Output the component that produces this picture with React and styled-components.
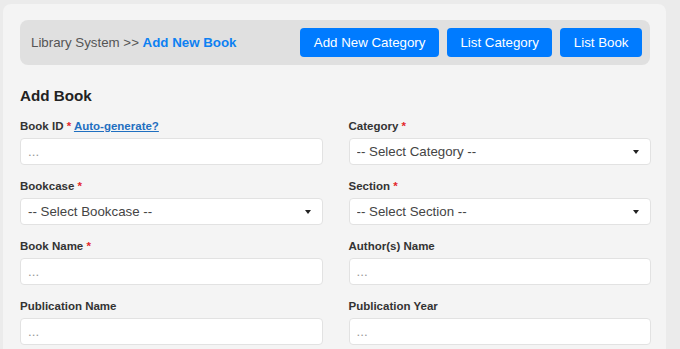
import React from "react";
import styled, { createGlobalStyle } from "styled-components";

const Global = createGlobalStyle`
  html, body { margin: 0; padding: 0; background: #ebebeb; }
  body { font-family: "Liberation Sans", Arial, sans-serif; }
  * { box-sizing: border-box; }
`;

const Page = styled.div`
  padding: 4px 14px 0 3px;
  height: 349px;
  overflow: hidden;
`;

const Card = styled.div`
  background: #f4f4f4;
  border-radius: 8px;
  padding: 16px 15px 30px 17px;
  min-height: 400px;
`;

const Header = styled.div`
  display: flex;
  align-items: center;
  justify-content: space-between;
  background: #e0e0e0;
  border-radius: 8px;
  height: 45px;
  padding: 0 8px 0 11px;
  margin-right: 1px;
`;

const Crumb = styled.div`
  font-size: 13.3px;
  color: #555;
`;

const CrumbActive = styled.span`
  color: #0d80f2;
  font-weight: bold;
`;

const Actions = styled.div`
  display: flex;
  gap: 8px;
`;

const Button = styled.button`
  height: 29px;
  padding: 0 13.5px;
  border: none;
  border-radius: 4px;
  background: #007bff;
  color: #fff;
  font-family: inherit;
  font-size: 13.3px;
  cursor: pointer;
`;

const Title = styled.h2`
  margin: 22px 0 0;
  font-size: 15.2px;
  line-height: 18px;
  font-weight: bold;
  color: #222;
`;

const Grid = styled.div`
  display: grid;
  grid-template-columns: 1fr 1fr;
  column-gap: 26px;
  margin-top: 14px;
`;

const Field = styled.div`
  display: flex;
  flex-direction: column;
  gap: 5px;
  margin-bottom: 14px;
`;

const Label = styled.label`
  font-size: 11.5px;
  line-height: 14px;
  font-weight: bold;
  color: #333;
`;

const Req = styled.span`
  color: #e3262b;
`;

const Link = styled.a`
  color: #1f6fc0;
  text-decoration: underline;
  cursor: pointer;
`;

const Input = styled.input`
  height: 27px;
  width: 100%;
  border: 1px solid #e2e2e2;
  border-radius: 4px;
  background: #fff;
  padding: 0 7px;
  font-family: inherit;
  font-size: 13.3px;
  color: #444;
  &::placeholder { color: #9a9a9a; }
`;

const SelectWrap = styled.div`
  position: relative;
`;

const Select = styled.select`
  appearance: none;
  -webkit-appearance: none;
  height: 27px;
  width: 100%;
  border: 1px solid #e2e2e2;
  border-radius: 4px;
  background: #fff;
  padding: 0 7px;
  font-family: inherit;
  font-size: 13.3px;
  color: #444;
`;

const Caret = styled.svg`
  position: absolute;
  right: 12px;
  top: 12px;
  pointer-events: none;
`;

const TextField = ({ label, required, extra }) => (
  <Field>
    <Label>
      {label}
      {required && <Req> *</Req>}
      {extra && <> <Link>{extra}</Link></>}
    </Label>
    <Input placeholder="..." />
  </Field>
);

const SelectField = ({ label, required, option }) => (
  <Field>
    <Label>
      {label}
      {required && <Req> *</Req>}
    </Label>
    <SelectWrap>
      <Select defaultValue="">
        <option value="">{option}</option>
      </Select>
      <Caret width="6" height="4" viewBox="0 0 6 4">
        <path d="M0 0 L6 0 L3 4 Z" fill="#222" />
      </Caret>
    </SelectWrap>
  </Field>
);

export default function App() {
  return (
    <>
      <Global />
      <Page>
        <Card>
          <Header>
            <Crumb>
              Library System &gt;&gt; <CrumbActive>Add New Book</CrumbActive>
            </Crumb>
            <Actions>
              <Button>Add New Category</Button>
              <Button>List Category</Button>
              <Button>List Book</Button>
            </Actions>
          </Header>
          <Title>Add Book</Title>
          <Grid>
            <TextField label="Book ID" required extra="Auto-generate?" />
            <SelectField label="Category" required option="-- Select Category --" />
            <SelectField label="Bookcase" required option="-- Select Bookcase --" />
            <SelectField label="Section" required option="-- Select Section --" />
            <TextField label="Book Name" required />
            <TextField label="Author(s) Name" />
            <TextField label="Publication Name" />
            <TextField label="Publication Year" />
          </Grid>
        </Card>
      </Page>
    </>
  );
}
